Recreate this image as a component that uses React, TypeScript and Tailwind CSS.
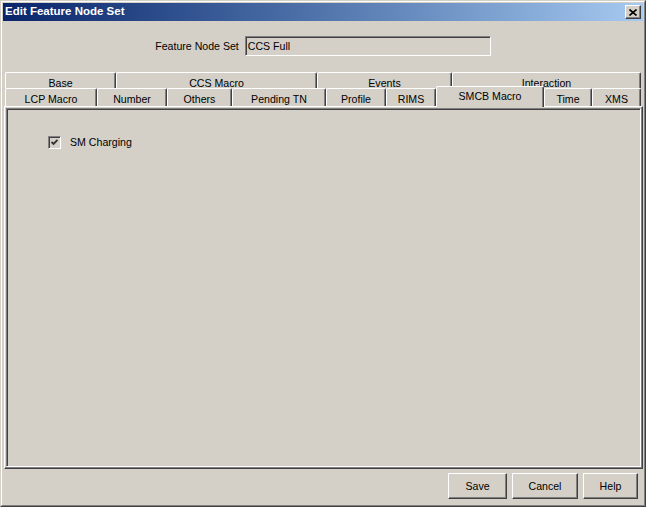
import React from 'react'

const raised =
    'border border-t-white border-l-white border-r-[#404040] border-b-[#404040] shadow-[inset_-1px_-1px_0_#808080]'
const sunken =
    'border border-t-[#808080] border-l-[#808080] border-r-white border-b-white shadow-[inset_1px_1px_0_#404040]'

const topRow = [
    { label: 'Base', w: 'w-[111px]' },
    { label: 'CCS Macro', w: 'w-[201px]' },
    { label: 'Events', w: 'w-[135px]' },
    { label: 'Interaction', w: 'w-[189px]' },
]

const bottomRow = [
    { label: 'LCP Macro', w: 'w-[92px]' },
    { label: 'Number', w: 'w-[70px]' },
    { label: 'Others', w: 'w-[65px]' },
    { label: 'Pending TN', w: 'w-[94px]' },
    { label: 'Profile', w: 'w-[60px]' },
    { label: 'RIMS', w: 'w-[50px]' },
    { label: 'SMCB Macro', w: 'w-[108px]', selected: true },
    { label: 'Time', w: 'w-[48px]' },
    { label: 'XMS', w: 'w-[49px]' },
]

const tabEdge =
    'rounded-t-[2px] border-l border-t border-r border-l-white border-t-white border-r-[#404040] shadow-[inset_-1px_0_0_#808080] text-center leading-[14px] whitespace-nowrap'

function Button({ label, w }: { label: string; w: string }) {
    return (
        <div className={`${w} h-[26px] ${raised} flex items-center justify-center pt-[1px]`}>
            {label}
        </div>
    )
}

export default function App() {
    return (
        <div className="w-[646px] h-[507px] bg-[#d4d0c8] border border-t-[#d4d0c8] border-l-[#d4d0c8] border-r-[#404040] border-b-[#404040] font-['Liberation_Sans',Arial,sans-serif] text-[10.6px] text-black">
            <div className="h-full border border-t-white border-l-white border-r-[#808080] border-b-[#808080] p-[1px] flex flex-col">
                {/* Title bar */}
                <div className="h-[18px] flex items-center bg-gradient-to-r from-[#0a246a] to-[#a6caf0]">
                    <span className="pl-[2px] text-white font-bold text-[11.5px] leading-none">
                        Edit Feature Node Set
                    </span>
                    <div
                        className={`ml-auto mr-[2px] w-[16px] h-[14px] bg-[#d4d0c8] ${raised} flex items-center justify-center`}
                    >
                        <svg width="8" height="7" viewBox="0 0 8 7">
                            <path d="M0.5 0.5 L7.5 6.5 M7.5 0.5 L0.5 6.5" stroke="#000" strokeWidth="1.6" />
                        </svg>
                    </div>
                </div>

                {/* Feature Node Set */}
                <div className="mt-[15px] flex items-center justify-center gap-[6px]">
                    <span className="pt-[1px]">Feature Node Set</span>
                    <div className={`w-[246px] h-[20px] ${sunken} flex items-center pl-[2px] pt-[1px]`}>
                        CCS Full
                    </div>
                </div>

                {/* Tabbed pane */}
                <div className="mt-[16px] ml-[1px] w-[639px] flex flex-col">
                    <div className="flex pl-[1px]">
                        {topRow.map((t) => (
                            <div key={t.label} className={`${t.w} h-[16px] overflow-hidden pt-[3px] ${tabEdge}`}>
                                {t.label}
                            </div>
                        ))}
                    </div>
                    <div className="flex pl-[1px] h-[18px] items-start">
                        {bottomRow.map((t) =>
                            t.selected ? (
                                <div
                                    key={t.label}
                                    className={`${t.w} relative z-10 -mt-[2px] h-[21px] bg-[#d4d0c8] pt-[2px] ${tabEdge}`}
                                >
                                    {t.label}
                                </div>
                            ) : (
                                <div key={t.label} className={`${t.w} h-[18px] pt-[3px] ${tabEdge}`}>
                                    {t.label}
                                </div>
                            )
                        )}
                    </div>
                    <div className={`h-[363px] p-[1px] ${raised}`}>
                        <div className={`h-full ${sunken} pt-[26px] pl-[41px]`}>
                            <div className="flex items-center gap-[9px]">
                                <div className={`w-[13px] h-[13px] ${sunken} flex items-center justify-center`}>
                                    <svg width="7" height="7" viewBox="0 0 7 7">
                                        <path d="M0.5 3 L2.5 5 L6.5 1" fill="none" stroke="#333" strokeWidth="1.8" />
                                    </svg>
                                </div>
                                <span>SM Charging</span>
                            </div>
                        </div>
                    </div>
                </div>

                {/* Buttons */}
                <div className="mt-[4px] flex justify-end gap-[5px] pr-[5px]">
                    <Button label="Save" w="w-[59px]" />
                    <Button label="Cancel" w="w-[66px]" />
                    <Button label="Help" w="w-[55px]" />
                </div>
            </div>
        </div>
    )
}
